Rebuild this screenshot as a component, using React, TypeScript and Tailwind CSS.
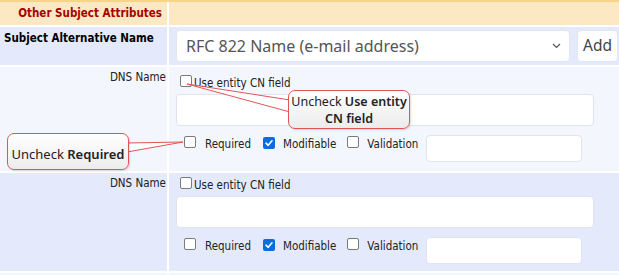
import React from 'react';

function Box({ checked = false }: { checked?: boolean }) {
  if (checked) {
    return (
      <span className="inline-flex h-[12px] w-[12px] shrink-0 items-center justify-center rounded-[2px] bg-[#0b6ce0]">
        <svg width="10" height="10" viewBox="0 0 10 10">
          <path d="M2 5.2 L4.2 7.3 L8 2.8" fill="none" stroke="#fff" strokeWidth="1.6" strokeLinecap="round" strokeLinejoin="round" />
        </svg>
      </span>
    );
  }
  return <span className="inline-block h-[12px] w-[12px] shrink-0 rounded-[2px] border border-[#7a7a7a] bg-white" />;
}

function FieldBlock({ bg, first }: { bg: string; first?: boolean }) {
  return (
    <>
      <div className={`${bg} pr-[1px] pt-[2px] text-right text-[11.5px] leading-[16px] text-[#222]`}>DNS Name</div>
      <div className={`${bg} pl-[7px] ${first ? 'pt-[8px]' : 'pt-[4px]'}`}>
        <div className="flex items-center text-[11.5px] leading-[16px] text-[#222]">
          <span className="ml-[4px]">
            <Box />
          </span>
          <span className="ml-[2px]">Use entity CN field</span>
        </div>
        <div className="mt-[3px] h-[32px] w-[418px] rounded-[4px] border border-[#dfe4ef] bg-white" />
        <div className="mt-[9px] flex items-start text-[11.5px] leading-[16px] text-[#222]">
          <div className="flex items-center pt-[1px]">
            <span className="ml-[8px]">
              <Box />
            </span>
            <span className="ml-[9px]">Required</span>
            <span className="ml-[12px]">
              <Box checked />
            </span>
            <span className="ml-[8px]">Modifiable</span>
            <span className="ml-[11px]">
              <Box />
            </span>
            <span className="ml-[8px]">Validation</span>
          </div>
          <div className="ml-[8px] h-[27px] w-[156px] rounded-[4px] border border-[#dfe4ef] bg-white" />
        </div>
      </div>
    </>
  );
}

export default function App() {
  return (
    <div className="relative h-[275px] w-[619px] overflow-hidden bg-white font-['DejaVu_Sans_Condensed','DejaVu_Sans',sans-serif]">
      <div className="border-t-2 border-[#f8d38a]">
        <div className="grid grid-cols-[167px_1fr] grid-rows-[23px_38px_104px_98px_20px] gap-x-[2px] gap-y-[2px] bg-white">
          <div className="flex items-center justify-end bg-[#fde8c4] pr-[5px] text-[11.5px] font-bold text-[#a80000]">
            Other Subject Attributes
          </div>
          <div className="bg-[#fde8c4]" />

          <div className="bg-[#e4eafb] pl-[4px] pt-[4px] text-[11.5px] font-bold leading-[15px] text-black">
            Subject Alternative Name
          </div>
          <div className="flex items-start gap-[7px] bg-[#e4eafb] pl-[7px] pt-[3px]">
            <div className="flex h-[32px] w-[394px] items-center justify-between rounded-[4px] border border-[#e2e6ef] bg-white pl-[9px] pr-[8px] font-['Noto_Sans',sans-serif] text-[16px] text-[#555]">
              <span>RFC 822 Name (e-mail address)</span>
              <svg width="9" height="6" viewBox="0 0 9 6">
                <path d="M1 1 L4.5 4.5 L8 1" fill="none" stroke="#555" strokeWidth="1.2" />
              </svg>
            </div>
            <div className="flex h-[32px] w-[41px] items-center justify-center rounded-[4px] border border-[#e2e6ef] bg-white font-['Noto_Sans',sans-serif] text-[15.5px] text-[#444]">
              Add
            </div>
          </div>

          <FieldBlock bg="bg-[#f4f6fd]" first />
          <FieldBlock bg="bg-[#e4eafb]" />

          <div className="bg-[#f4f6fd]" />
          <div className="bg-[#f4f6fd]" />
        </div>
      </div>

      <svg className="absolute left-0 top-0" width="619" height="275">
        <polygon points="187,84 290,100 290,112" fill="#fff" stroke="#e05656" strokeWidth="1" />
        <polygon points="183,142 127,143 127,152" fill="#fff" stroke="#e05656" strokeWidth="1" />
      </svg>

      <div className="absolute left-[288px] top-[90px] flex h-[39px] w-[122px] flex-col items-center justify-center whitespace-nowrap rounded-[7px] border border-[#e05656] bg-gradient-to-b from-white to-[#ececec] font-['Noto_Sans',sans-serif] text-[12.5px] leading-[17px] text-[#222] shadow-[1px_1px_2px_rgba(0,0,0,0.15)]">
        <div>
          Uncheck <b className="font-semibold">Use entity</b>
        </div>
        <div>
          <b className="font-semibold">CN field</b>
        </div>
      </div>

      <div className="absolute left-[7px] top-[133px] flex h-[37px] w-[122px] items-center justify-center whitespace-nowrap rounded-[7px] border border-[#e05656] bg-gradient-to-b from-white to-[#ececec] pt-[6px] font-['Noto_Sans',sans-serif] text-[13px] leading-[17px] text-[#222] shadow-[1px_1px_2px_rgba(0,0,0,0.15)]">
        <div>
          Uncheck <b className="font-semibold">Required</b>
        </div>
      </div>
    </div>
  );
}
